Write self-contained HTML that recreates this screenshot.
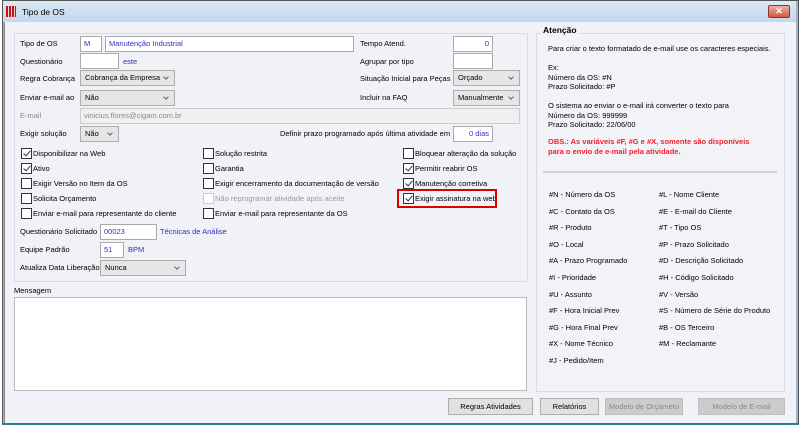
<!DOCTYPE html>
<html><head><meta charset="utf-8"><style>
*{margin:0;padding:0;box-sizing:border-box}
body{width:800px;height:426px;background:#fff;font-family:"Liberation Sans",sans-serif;font-size:7.5px;color:#000;position:relative;overflow:hidden}
.a{position:absolute;white-space:nowrap}
.win{position:absolute;left:2px;top:0;width:797px;height:425px;background:#9fb4cc;border:1px solid #555;border-bottom:2px solid #2a7f8a}
.title{position:absolute;left:3px;top:1px;width:793px;height:21px;background:linear-gradient(#dce8f5,#c4d7ec)}
.body{position:absolute;left:4px;top:22px;width:792px;height:401px;background:#f0f2f8;border-left:1px solid #888}
.grp{position:absolute;border:1px solid #d8dbe2;background:#f0f2f8}
.in{position:absolute;background:#fff;border:1px solid #a9a9a9;height:16px;line-height:14px;padding:0 3px;color:#3030c0}
.sel{position:absolute;background:#e6e6e6;border:1px solid #adadad;height:16px;line-height:14px;padding:0 4px}
.sel:after{content:"";position:absolute;right:6px;top:4px;width:3px;height:3px;border-right:1px solid #666;border-bottom:1px solid #666;transform:rotate(45deg)}
.l{position:absolute;white-space:nowrap;line-height:10px}
.cb{position:absolute;width:11px;height:11px;border:1px solid #333;background:#fff}
.cb.c:after{content:"";position:absolute;left:3px;top:0px;width:3px;height:6px;border-right:1px solid #333;border-bottom:1px solid #333;transform:rotate(40deg)}
.btn{position:absolute;height:17px;line-height:15px;text-align:center;background:#e1e1e1;border:1px solid #adadad}
.btn.d{background:#cccccc;color:#8a8a8a;border-color:#bfbfbf}
.blue{color:#3030c0}
</style></head><body>
<div class="win"></div>
<div class="title"></div>
<div class="a" style="left:6px;top:6px;width:10px;height:11px;background:repeating-linear-gradient(90deg,#c0141a 0 2px,#f6d0d0 2px 3px)"></div>
<div class="l" style="left:22px;top:7px;font-size:8.5px">Tipo de OS</div>
<div class="a" style="left:768px;top:5px;width:22px;height:13px;background:linear-gradient(#eeb0a0,#d05a40);border:1px solid #8a3a2a;border-radius:2px;color:#fff;font-size:9px;text-align:center;line-height:11px;font-weight:bold">✕</div>
<div class="body"></div>

<div class="grp" style="left:14px;top:33px;width:514px;height:249px"></div>
<div class="l" style="left:20px;top:39px">Tipo de OS</div>
<div class="in" style="left:80px;top:36px;width:22px">M</div>
<div class="in" style="left:105px;top:36px;width:249px">Manutenção Industrial</div>
<div class="l" style="left:360px;top:39px">Tempo Atend.</div>
<div class="in" style="left:453px;top:36px;width:40px;text-align:right">0</div>
<div class="l" style="left:20px;top:57px">Questionário</div>
<div class="in" style="left:80px;top:53px;width:39px"></div>
<div class="l blue" style="left:123px;top:57px">este</div>
<div class="l" style="left:360px;top:57px">Agrupar por tipo</div>
<div class="in" style="left:453px;top:53px;width:40px"></div>
<div class="l" style="left:20px;top:74px">Regra Cobrança</div>
<div class="sel" style="left:80px;top:70px;width:95px">Cobrança da Empresa</div>
<div class="l" style="left:360px;top:74px">Situação Inicial para Peças</div>
<div class="sel" style="left:453px;top:70px;width:67px">Orçado</div>
<div class="l" style="left:20px;top:93px">Enviar e-mail ao</div>
<div class="sel" style="left:80px;top:90px;width:95px">Não</div>
<div class="l" style="left:360px;top:93px">Incluir na FAQ</div>
<div class="sel" style="left:453px;top:90px;width:67px">Manualmente</div>
<div class="l" style="left:20px;top:111px;color:#888">E-mail</div>
<div class="in" style="left:80px;top:108px;width:440px;background:#f0f0f0;color:#888;border-color:#ccc">vinicius.flores@cigam.com.br</div>
<div class="l" style="left:20px;top:129px">Exigir solução</div>
<div class="sel" style="left:80px;top:126px;width:39px">Não</div>
<div class="l" style="left:280px;top:129px">Definir prazo programado após última atividade em</div>
<div class="in" style="left:453px;top:126px;width:40px;text-align:right">0 dias</div>

<div class="cb c" style="left:21px;top:148px"></div><div class="l" style="left:33px;top:149px">Disponibilizar na Web</div>
<div class="cb c" style="left:21px;top:163px"></div><div class="l" style="left:33px;top:164px">Ativo</div>
<div class="cb" style="left:21px;top:178px"></div><div class="l" style="left:33px;top:179px">Exigir Versão no Item da OS</div>
<div class="cb" style="left:21px;top:193px"></div><div class="l" style="left:33px;top:194px">Solicita Orçamento</div>
<div class="cb" style="left:21px;top:208px"></div><div class="l" style="left:33px;top:209px">Enviar e-mail para representante do cliente</div>
<div class="cb" style="left:203px;top:148px"></div><div class="l" style="left:215px;top:149px">Solução restrita</div>
<div class="cb" style="left:203px;top:163px"></div><div class="l" style="left:215px;top:164px">Garantia</div>
<div class="cb" style="left:203px;top:178px"></div><div class="l" style="left:215px;top:179px">Exigir encerramento da documentação de versão</div>
<div class="cb" style="left:203px;top:193px;border-color:#ccc"></div><div class="l" style="left:215px;top:194px;color:#999">Não reprogramar atividade após aceite</div>
<div class="cb" style="left:203px;top:208px"></div><div class="l" style="left:215px;top:209px">Enviar e-mail para representante da OS</div>
<div class="cb" style="left:403px;top:148px"></div><div class="l" style="left:415px;top:149px">Bloquear alteração da solução</div>
<div class="cb c" style="left:403px;top:163px"></div><div class="l" style="left:415px;top:164px">Permitir reabrir OS</div>
<div class="cb c" style="left:403px;top:178px"></div><div class="l" style="left:415px;top:179px">Manutenção corretiva</div>
<div class="cb c" style="left:403px;top:193px"></div><div class="l" style="left:415px;top:194px">Exigir assinatura na web</div>
<div class="a" style="left:397px;top:189px;width:100px;height:19px;border:2px solid #e00000"></div>

<div class="l" style="left:20px;top:227px">Questionário Solicitado</div>
<div class="in" style="left:100px;top:224px;width:57px">00023</div>
<div class="l blue" style="left:160px;top:227px">Técnicas de Análise</div>
<div class="l" style="left:20px;top:245px">Equipe Padrão</div>
<div class="in" style="left:100px;top:242px;width:24px">51</div>
<div class="l blue" style="left:128px;top:245px">BPM</div>
<div class="l" style="left:20px;top:263px">Atualiza Data Liberação</div>
<div class="sel" style="left:100px;top:260px;width:86px">Nunca</div>

<div class="l" style="left:14px;top:286px">Mensagem</div>
<div class="a" style="left:14px;top:297px;width:513px;height:94px;background:#fff;border:1px solid #bbb"></div>

<div class="grp" style="left:536px;top:33px;width:249px;height:359px;background:#f2f3f7"></div>
<div class="l" style="left:541px;top:25px;font-weight:bold;font-size:8.5px;background:#f0f2f8;padding:0 2px">Atenção</div>
<div class="l" style="left:548px;top:44px;line-height:9.5px">Para criar o texto formatado de e-mail use os caracteres especiais.<br><br>Ex:<br>Número da OS: #N<br>Prazo Solicitado: #P<br><br>O sistema ao enviar o e-mail irá converter o texto para<br>Número da OS: 999999<br>Prazo Solicitado: 22/06/00</div>
<div class="l" style="left:548px;top:137px;line-height:10px;color:#f02030;font-weight:bold">OBS.: As variáveis #F, #G e #X, somente são disponíveis<br>para o envio de e-mail pela atividade.</div>
<div class="a" style="left:543px;top:171px;width:234px;height:2px;background:#cfd2d8"></div>
<div class="l" style="left:549px;top:187px;line-height:16.6px">#N - Número da OS<br>#C - Contato da OS<br>#R - Produto<br>#O - Local<br>#A - Prazo Programado<br>#I - Prioridade<br>#U - Assunto<br>#F - Hora Inicial Prev<br>#G - Hora Final Prev<br>#X - Nome Técnico<br>#J - Pedido/Item</div>
<div class="l" style="left:659px;top:187px;line-height:16.6px">#L - Nome Cliente<br>#E - E-mail do Cliente<br>#T - Tipo OS<br>#P - Prazo Solicitado<br>#D - Descrição Solicitado<br>#H - Código Solicitado<br>#V - Versão<br>#S - Número de Série do Produto<br>#B - OS Terceiro<br>#M - Reclamante</div>

<div class="btn" style="left:448px;top:398px;width:85px">Regras Atividades</div>
<div class="btn" style="left:540px;top:398px;width:59px">Relatórios</div>
<div class="btn d" style="left:605px;top:398px;width:78px">Modelo de Orçameto</div>
<div class="btn d" style="left:698px;top:398px;width:87px">Modelo de E-mail</div>
</body></html>
